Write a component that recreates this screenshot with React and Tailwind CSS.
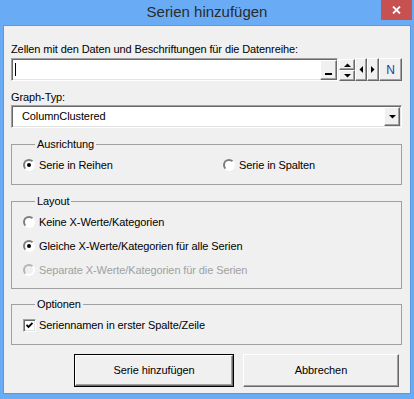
import React from "react";

const sunken =
  "border border-t-[#a0a0a0] border-l-[#a0a0a0] border-b-white border-r-white shadow-[inset_1px_1px_0_#696969,inset_-1px_-1px_0_#e3e3e3]";
const raised =
  "bg-[#f0f0f0] border border-t-white border-l-white border-b-[#696969] border-r-[#696969] shadow-[inset_-1px_-1px_0_#a0a0a0]";

function Radio({ checked, disabled }) {
  return (
    <span
      className={`flex h-[12px] w-[12px] shrink-0 items-center justify-center rounded-full border-[2px] ${
        disabled
          ? "border-t-[#b4b4b4] border-l-[#b4b4b4] bg-[#f0f0f0]"
          : "border-t-[#7d7d7d] border-l-[#7d7d7d] bg-white"
      } border-b-white border-r-white`}
    >
      {checked && <span className="h-[4px] w-[4px] rounded-full bg-black" />}
    </span>
  );
}

function Group({ title, children, className = "" }) {
  return (
    <fieldset className={`border border-[#a0a0a0] ${className}`}>
      <legend className="ml-[12px] px-[2px] leading-[13px]">{title}</legend>
      {children}
    </fieldset>
  );
}

function Tri({ dir }) {
  const pts = {
    up: "0,4 7,4 3.5,0.5",
    down: "0,0 7,0 3.5,3.5",
    left: "4,0 4,7 0.5,3.5",
    right: "0,0 0,7 3.5,3.5",
  }[dir];
  const w = dir === "up" || dir === "down" ? 7 : 4;
  const h = dir === "up" || dir === "down" ? 4 : 7;
  return (
    <svg width={w} height={h} viewBox={`0 0 ${w} ${h}`}>
      <polygon points={pts} fill="#000" />
    </svg>
  );
}

export default function App() {
  return (
    <div className="flex h-[399px] w-[414px] flex-col bg-[#6aabf5] font-['Liberation_Sans',Arial,sans-serif] text-[11px] tracking-[-0.1px] text-black">
      {/* title bar */}
      <div className="grid h-[25px] shrink-0 grid-cols-[1fr_auto_1fr] tracking-normal">
        <div />
        <div className="pt-[1px] text-[15px] leading-[22px] text-[#2b2b2b]">
          Serien hinzufügen
        </div>
        <div className="flex justify-end">
          <div className="mr-[2px] flex h-[20px] w-[31px] items-center justify-center bg-[#c75050]">
            <svg width="9" height="8" viewBox="0 0 9 8">
              <path d="M1 0.5 L8 7.5 M8 0.5 L1 7.5" stroke="#fff" strokeWidth="1.8" />
            </svg>
          </div>
        </div>
      </div>

      {/* client area */}
      <div className="mx-[3px] mb-[5px] flex flex-1 flex-col border border-[#5d97dc] bg-[#f0f0f0] pl-[7px] pr-[8px] pt-[17px]">
        <div className="h-[13px] leading-[13px]">
          Zellen mit den Daten und Beschriftungen für die Datenreihe:
        </div>

        <div className="mt-[2px] flex h-[23px]">
          <div className={`flex w-[327px] items-center bg-white ${sunken}`}>
            <div className="ml-[3px] h-[13px] w-[1px] flex-none bg-black" />
            <div className="flex-1" />
            <div className={`flex h-[20px] w-[17px] items-end justify-center pb-[4px] ${raised}`}>
              <div className="h-[2px] w-[7px] bg-black" />
            </div>
          </div>
          <div className="ml-[1px] flex w-[16px] flex-col pt-[1px]">
            <div className={`flex h-[11px] items-center justify-center ${raised}`}>
              <Tri dir="up" />
            </div>
            <div className={`flex h-[11px] items-center justify-center ${raised}`}>
              <Tri dir="down" />
            </div>
          </div>
          <div className={`flex w-[12px] items-center justify-center ${raised}`}>
            <Tri dir="left" />
          </div>
          <div className={`flex w-[12px] items-center justify-center ${raised}`}>
            <Tri dir="right" />
          </div>
          <div
            className={`flex w-[23px] items-center justify-center text-[12px] tracking-normal text-[#1f3c9c] ${raised}`}
          >
            N
          </div>
        </div>

        <div className="mt-[10px] h-[13px] leading-[13px]">Graph-Typ:</div>

        <div className={`mt-[1px] flex h-[23px] items-center bg-white ${sunken}`}>
          <div className="flex-1 pl-[10px] leading-[13px]">ColumnClustered</div>
          <div className={`mr-[1px] flex h-[19px] w-[16px] items-center justify-center ${raised}`}>
            <Tri dir="down" />
          </div>
        </div>

        <Group title="Ausrichtung" className="mt-[10px] pb-[7px] pl-[11px] pt-[2px]">
          <div className="flex h-[24px] items-center">
            <div className="flex w-[200px] items-center">
              <Radio checked />
              <span className="ml-[4px]">Serie in Reihen</span>
            </div>
            <div className="flex items-center">
              <Radio />
              <span className="ml-[4px]">Serie in Spalten</span>
            </div>
          </div>
        </Group>

        <Group title="Layout" className="mt-[10px] pb-[6px] pl-[11px] pt-[2px]">
          <div className="flex h-[24px] items-center">
            <Radio />
            <span className="ml-[4px]">Keine X-Werte/Kategorien</span>
          </div>
          <div className="flex h-[24px] items-center">
            <Radio checked />
            <span className="ml-[4px]">Gleiche X-Werte/Kategorien für alle Serien</span>
          </div>
          <div className="flex h-[24px] items-center">
            <Radio disabled />
            <span className="ml-[4px] text-[#a0a0a0]">
              Separate X-Werte/Kategorien für die Serien
            </span>
          </div>
        </Group>

        <Group title="Optionen" className="mt-[9px] pb-[7px] pl-[11px] pt-[2px]">
          <div className="flex h-[24px] items-center">
            <span className={`flex h-[13px] w-[13px] items-center justify-center bg-white ${sunken}`}>
              <svg width="7" height="7" viewBox="0 0 7 7">
                <path d="M0.5 3 L2.5 5 L6.5 1" stroke="#000" strokeWidth="1.8" fill="none" />
              </svg>
            </span>
            <span className="ml-[3px]">Seriennamen in erster Spalte/Zeile</span>
          </div>
        </Group>

        <div className="mt-[9px] flex justify-end gap-[9px] pr-[3px]">
          <div className="h-[33px] w-[160px] border border-black">
            <div className={`flex h-full items-center justify-center ${raised}`}>
              Serie hinzufügen
            </div>
          </div>
          <div className={`flex h-[33px] w-[156px] items-center justify-center ${raised}`}>
            Abbrechen
          </div>
        </div>
      </div>
    </div>
  );
}
